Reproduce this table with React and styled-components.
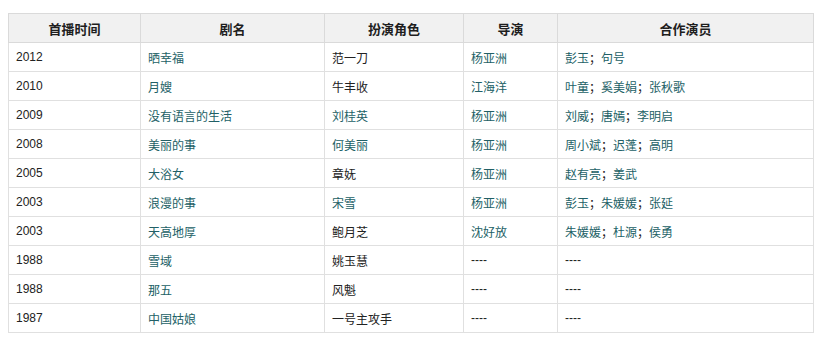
import React from "react";
import styled, { createGlobalStyle } from "styled-components";

const Global = createGlobalStyle`
  html, body { margin: 0; padding: 0; background: #fff; }
  body { font-family: "Liberation Sans", "Noto Sans CJK SC", sans-serif; }
`;

const Wrap = styled.div`
  padding: 13px 8px 0 8px;
`;

const Table = styled.table`
  border-collapse: collapse;
  table-layout: fixed;
  width: 805px;
  font-size: 12px;
  color: #222;
`;

const Th = styled.th`
  height: 28px;
  padding: 0;
  background: #f1f1f1;
  border: 1px solid #dadada;
  font-size: 13px;
  font-weight: bold;
  color: #1e1e1e;
  text-align: center;
  vertical-align: middle;
`;

const Td = styled.td`
  height: 28px;
  padding: 0 0 0 7px;
  border: 1px solid #e0e0e0;
  text-align: left;
  vertical-align: middle;
  color: #222;
  white-space: nowrap;
`;

const Link = styled.span`
  color: #225f66;
`;

const Sep = styled.span`
  color: #222;
`;

const cols = [132, 184, 139, 94, 256];

const rows = [
  { y: "2012", t: "晒幸福", r: "范一刀", rl: false, d: "杨亚洲", c: ["彭玉", "句号"] },
  { y: "2010", t: "月嫂", r: "牛丰收", rl: false, d: "江海洋", c: ["叶童", "奚美娟", "张秋歌"] },
  { y: "2009", t: "没有语言的生活", r: "刘桂英", rl: true, d: "杨亚洲", c: ["刘威", "唐嫣", "李明启"] },
  { y: "2008", t: "美丽的事", r: "何美丽", rl: true, d: "杨亚洲", c: ["周小斌", "迟蓬", "高明"] },
  { y: "2005", t: "大浴女", r: "章妩", rl: false, d: "杨亚洲", c: ["赵有亮", "姜武"] },
  { y: "2003", t: "浪漫的事", r: "宋雪", rl: true, d: "杨亚洲", c: ["彭玉", "朱媛媛", "张延"] },
  { y: "2003", t: "天高地厚", r: "鲍月芝", rl: false, d: "沈好放", c: ["朱媛媛", "杜源", "侯勇"] },
  { y: "1988", t: "雪域", r: "姚玉慧", rl: false, d: null, c: null },
  { y: "1988", t: "那五", r: "风魁", rl: false, d: null, c: null },
  { y: "1987", t: "中国姑娘", r: "一号主攻手", rl: false, d: null, c: null },
];

const heads = ["首播时间", "剧名", "扮演角色", "导演", "合作演员"];

export default function App() {
  return (
    <>
      <Global />
      <Wrap>
        <Table>
          <colgroup>
            {cols.map((w, i) => (
              <col key={i} style={{ width: w }} />
            ))}
          </colgroup>
          <thead>
            <tr>
              {heads.map((h) => (
                <Th key={h}>{h}</Th>
              ))}
            </tr>
          </thead>
          <tbody>
            {rows.map((row, i) => (
              <tr key={i}>
                <Td>{row.y}</Td>
                <Td>
                  <Link>{row.t}</Link>
                </Td>
                <Td>{row.rl ? <Link>{row.r}</Link> : row.r}</Td>
                <Td>{row.d ? <Link>{row.d}</Link> : "----"}</Td>
                <Td>
                  {row.c
                    ? row.c.map((n, j) => (
                        <React.Fragment key={j}>
                          {j > 0 && <Sep>；</Sep>}
                          <Link>{n}</Link>
                        </React.Fragment>
                      ))
                    : "----"}
                </Td>
              </tr>
            ))}
          </tbody>
        </Table>
      </Wrap>
    </>
  );
}
